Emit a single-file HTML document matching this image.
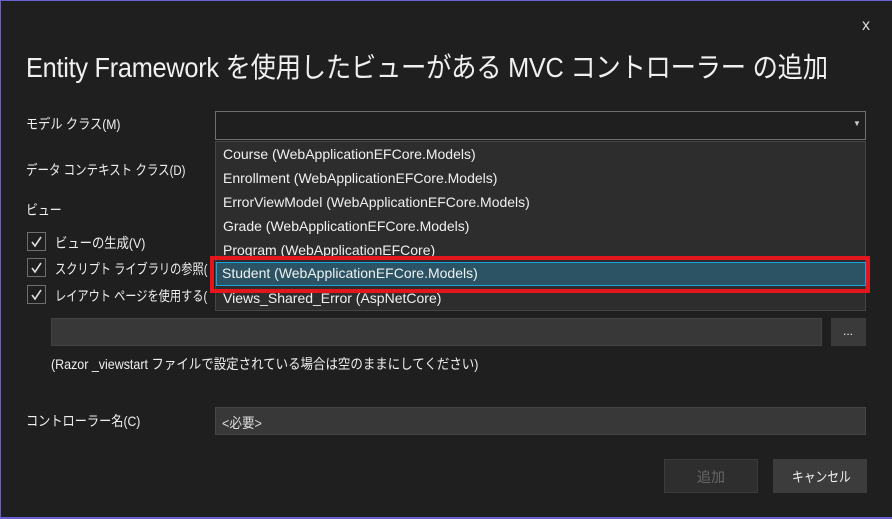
<!DOCTYPE html>
<html><head><meta charset="utf-8"><style>
*{margin:0;padding:0;box-sizing:border-box}
body{width:892px;height:519px;background:#1f1f1f;overflow:hidden;position:relative;font-family:"Liberation Sans","Noto Sans CJK JP",sans-serif;color:#f0f0f0;font-size:14px}
.frame{position:absolute;left:0;top:0;width:892px;height:519px;border:1px solid #6b5fd6;border-right:none}
.a{position:absolute;white-space:nowrap;transform-origin:0 0}
.t{left:26px;top:46px;font-size:28px;transform:scaleX(0.905);letter-spacing:-0.3px}
.box{position:absolute;border:1px solid #6e6e6e;background:#1f1f1f}
.inp{position:absolute;background:#383838;border:1px solid #434343}
.cb{position:absolute;left:27px;width:19px;height:19px;border:1px solid #6e6e6e}
.list{position:absolute;left:215px;top:141px;width:651px;height:170px;background:#2d2d2d;border:1px solid #454545}
.it{position:absolute;left:7px;font-size:14px;color:#f0f0f0}
</style></head><body>
<div class="frame"></div>
<div class="a" style="left:862px;top:17px;font-size:16px;color:#ddd">x</div>
<div class="a t">Entity Framework を使用したビューがある MVC コントローラー の追加</div>
<div class="a" style="left:26px;top:114px;transform:scaleX(0.87)">モデル クラス(M)</div>
<div class="a" style="left:26px;top:160px;transform:scaleX(0.82)">データ コンテキスト クラス(D)</div>
<div class="a" style="left:26px;top:200px;transform:scaleX(0.85)">ビュー</div>
<div class="cb" style="top:232px"><svg width="17" height="17"><path d="M4 9l3 4 6-9" stroke="#ddd" stroke-width="1.6" fill="none"/></svg></div><div class="a" style="left:55px;top:233px;transform:scaleX(0.88)">ビューの生成(V)</div>
<div class="cb" style="top:258px"><svg width="17" height="17"><path d="M4 9l3 4 6-9" stroke="#ddd" stroke-width="1.6" fill="none"/></svg></div><div class="a" style="left:55px;top:259px;transform:scaleX(0.8)">スクリプト ライブラリの参照(</div>
<div class="cb" style="top:285px"><svg width="17" height="17"><path d="M4 9l3 4 6-9" stroke="#ddd" stroke-width="1.6" fill="none"/></svg></div><div class="a" style="left:55px;top:286px;transform:scaleX(0.8)">レイアウト ページを使用する(</div>
<div class="box" style="left:215px;top:111px;width:651px;height:29px"></div>
<div class="a" style="left:853px;top:119px;font-size:8px;color:#ccc">▼</div>
<div class="list">
<div class="it" style="top:4px">Course (WebApplicationEFCore.Models)</div>
<div class="it" style="top:28px">Enrollment (WebApplicationEFCore.Models)</div>
<div class="it" style="top:52px">ErrorViewModel (WebApplicationEFCore.Models)</div>
<div class="it" style="top:76px">Grade (WebApplicationEFCore.Models)</div>
<div class="it" style="top:100px">Program (WebApplicationEFCore)</div>
<div class="it" style="top:148px">Views_Shared_Error (AspNetCore)</div>
</div>
<div style="position:absolute;left:210px;top:256px;width:660px;height:37px;border:4px solid #e3151d"></div>
<div style="position:absolute;left:216px;top:262px;width:650px;height:24px;background:#2b5364;border:1px solid #1ba1e2"></div>
<div class="a" style="left:222px;top:265px">Student (WebApplicationEFCore.Models)</div>
<div class="inp" style="left:51px;top:318px;width:771px;height:28px"></div>
<div class="inp" style="left:831px;top:318px;width:35px;height:28px;background:#3a3a3a;border:none"></div>
<div class="a" style="left:843px;top:324px;font-size:12px">...</div>
<div class="a" style="left:51px;top:354px;transform:scaleX(0.89)">(Razor _viewstart ファイルで設定されている場合は空のままにしてください)</div>
<div class="a" style="left:26px;top:411px;transform:scaleX(0.87)">コントローラー名(C)</div>
<div class="inp" style="left:215px;top:407px;width:651px;height:28px;border-color:#454545"></div>
<div class="a" style="left:222px;top:413px;color:#ddd;transform:scaleX(0.9)">&lt;必要&gt;</div>
<div style="position:absolute;left:664px;top:459px;width:94px;height:34px;background:#2e2e2e;border:1px solid #3c3c3c"></div>
<div class="a" style="left:697px;top:467px;color:#666">追加</div>
<div style="position:absolute;left:773px;top:459px;width:94px;height:34px;background:#3c3c3c"></div>
<div class="a" style="left:792px;top:467px;color:#f0f0f0;transform:scaleX(0.84)">キャンセル</div>
<div style="position:absolute;left:0;top:517px;width:892px;height:2px;background:#6b5fd6"></div>
</body></html>
